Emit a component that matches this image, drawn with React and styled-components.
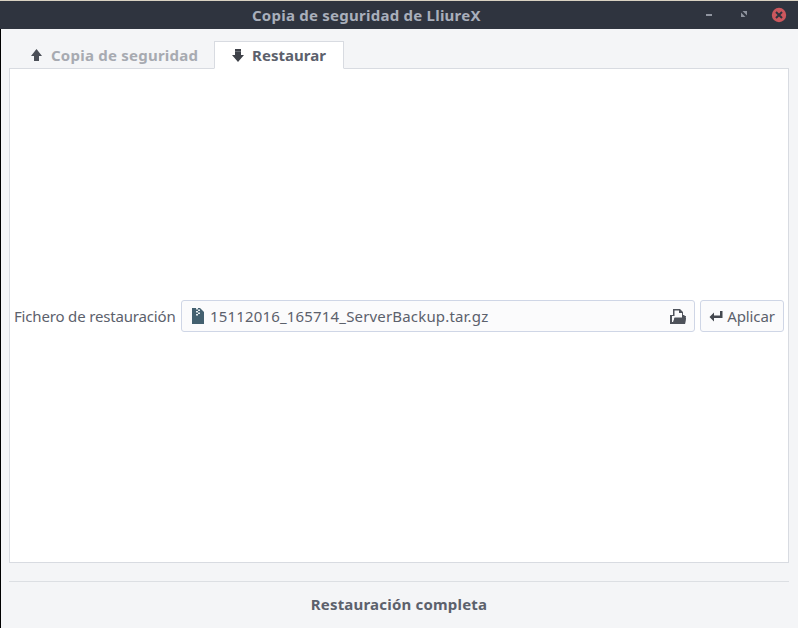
import React from 'react';
import styled, { createGlobalStyle } from 'styled-components';

const Global = createGlobalStyle`
  html, body { margin: 0; padding: 0; background: #f3f4f6; }
  body { font-family: "Noto Sans", sans-serif; }
`;
const Win = styled.div`
  width: 798px; height: 628px; display: flex; flex-direction: column;
  background: #f4f5f7; overflow: hidden; box-sizing: border-box;
`;
const TitleBar = styled.header`
  height: 29px; box-sizing: border-box; flex: none; background: #2f343f;
  border-top: 1px solid #d9d2c2; display: grid; grid-template-columns: 252px 1fr auto; align-items: center;
`;
const Title = styled.div`
  grid-column: 2; color: #a9afbb; font-weight: 700; font-size: 15px; letter-spacing: 0.24px; line-height: 28px;
  white-space: nowrap;
`;
const WinButtons = styled.div`
  grid-column: 3; display: flex; align-items: center; height: 28px; padding-right: 11px;
`;
const WinBtn = styled.svg`
  display: block; width: 16px; height: 16px; margin-left: ${p => p.$gap}px;
`;
const Body = styled.main`
  flex: 1; display: flex; flex-direction: column; padding: 12px 9px 0 8px; border-left: 1px solid #000; min-height: 0;
`;
const Tabs = styled.nav`
  display: flex; height: 28px; flex: none; margin-bottom: -1px; position: relative; z-index: 1; align-items: flex-end;
`;
const Tab = styled.div`
  box-sizing: border-box; height: ${p => (p.$active ? 28 : 27)}px; width: ${p => p.$w}px; display: flex; align-items: center;
  padding-left: ${p => p.$pad}px; padding-bottom: ${p => (p.$active ? 0 : 2)}px; gap: ${p => p.$gapv}px; font-size: 15px; font-weight: 700;
  letter-spacing: ${p => p.$ls}px; white-space: nowrap;
  color: ${p => (p.$active ? '#5c616c' : '#a7aab1')};
  background: ${p => (p.$active ? '#ffffff' : 'transparent')};
  border: ${p => (p.$active ? '1px solid #d8dbe1' : 'none')};
  border-bottom: ${p => (p.$active ? '1px solid #fff' : 'none')};
`;
const Panel = styled.section`
  height: 495px; box-sizing: border-box; flex: none; background: #fff; border: 1px solid #d8dbe1;
  display: flex; align-items: center; padding: 0 4px;
`;
const Row = styled.div`
  display: flex; align-items: center; width: 100%; height: 32px; margin-top: 1px;
`;
const Label = styled.label`
  font-size: 15px; letter-spacing: -0.17px; color: #5c616c; white-space: nowrap; width: 167px; flex: none;
`;
const FileField = styled.div`
  box-sizing: border-box; width: 514px; height: 32px; flex: none; display: flex; align-items: center;
  border: 1px solid #cfd6e6; border-radius: 3px; background: #fbfbfc; padding: 0 8px 0 10px; gap: 6px;
`;
const FileName = styled.span`
  flex: 1; font-size: 15px; letter-spacing: 0.17px; color: #5c616c; white-space: nowrap;
`;
const ApplyBtn = styled.button`
  box-sizing: border-box; width: 84px; height: 32px; margin-left: 5px; flex: none; display: flex; align-items: center; justify-content: center; gap: 4px;
  border: 1px solid #cfd6e6; border-radius: 3px; background: #fbfbfc; padding: 0;
  font-family: inherit; font-size: 15px; letter-spacing: -0.1px; color: #5c616c;
`;
const Separator = styled.hr`
  border: 0; border-top: 1px solid #dcdfe3; margin: 18px 0 0 0; height: 0; flex: none;
`;
const Status = styled.footer`
  flex: 1; display: flex; align-items: center; justify-content: center; font-size: 15px; font-weight: 700;
  letter-spacing: 0.2px; color: #5c616c; padding-bottom: 2px;
`;
const Ic = styled.svg`display: block; flex: none;`;

const ArrowUp = () => (
  <Ic width="11" height="12" viewBox="0 0 11 12"><path d="M5.500 0 11 7H8V12H3V7H0z" fill="#4b4f57" /></Ic>
);
const ArrowDown = () => (
  <Ic width="12" height="13" viewBox="0 0 12 13"><path d="M3 0h6v6h3L6 13 0 6h3z" fill="#3f4249" /><rect x="3" y="2" width="6" height="1" fill="#6a6e75" /></Ic>
);
const ZipIcon = () => (
  <Ic width="12" height="16" viewBox="0 0 12 16">
    <path d="M0 0h8l4 4v12H0z" fill="#43606f" />
    <path d="M4 0h2v1.500H4zM6 1.500h2V3H6zM4 3h2v1.500H4zM6 4.500h2V6H6zM4 6h2v1.500H4z" fill="#e6ecef" />
  </Ic>
);
const OpenIcon = () => (
  <Ic width="16" height="15" viewBox="0 0 16 15">
    <path fillRule="evenodd" d="M3 0h7l3 3v3h1.500v1H16L15 15H0V6h3zM4.500 1.500V7H2V13H3.500L4.500 8.500H12V4H9V1.500z" fill="#4f535b" />
    <path d="M4.500 9H16L15 15H2.500z" fill="#4f535b" />
  </Ic>
);
const ReturnIcon = () => (
  <Ic width="14" height="11" viewBox="0 0 14 11">
    <path d="M11 0h2.500v7H5V10.500L.5 6 5 1.500V4.500h6z" fill="#44484f" />
  </Ic>
);

export default function App() {
  return (
    <Win>
      <Global />
      <TitleBar>
        <Title>Copia de seguridad de LliureX</Title>
        <WinButtons>
          <WinBtn $gap={0} viewBox="0 0 16 16"><rect x="2" y="7" width="6" height="2" fill="#9095a0" /></WinBtn>
          <WinBtn $gap={17} viewBox="0 0 16 16">
            <path d="M4 5.500 8.500 10H4z" fill="#8e939e" />
            <path d="M5.500 4H10V8.500z" fill="#8e939e" />
          </WinBtn>
          <WinBtn $gap={18} viewBox="0 0 16 16">
            <circle cx="8" cy="8" r="7.200" fill="#cc575d" />
            <path d="M5 5l6 6M11 5l-6 6" stroke="#2f343f" strokeWidth="2" />
          </WinBtn>
        </WinButtons>
      </TitleBar>
      <Body>
        <Tabs>
          <Tab $w={205} $pad={22} $gapv={9} $ls={0.23}><ArrowUp />Copia de seguridad</Tab>
          <Tab $active $w={130} $pad={17} $gapv={8} $ls={0.05}><ArrowDown />Restaurar</Tab>
        </Tabs>
        <Panel>
          <Row>
            <Label>Fichero de restauración</Label>
            <FileField>
              <ZipIcon />
              <FileName>15112016_165714_ServerBackup.tar.gz</FileName>
              <OpenIcon />
            </FileField>
            <ApplyBtn><ReturnIcon />Aplicar</ApplyBtn>
          </Row>
        </Panel>
        <Separator />
        <Status>Restauración completa</Status>
      </Body>
    </Win>
  );
}
